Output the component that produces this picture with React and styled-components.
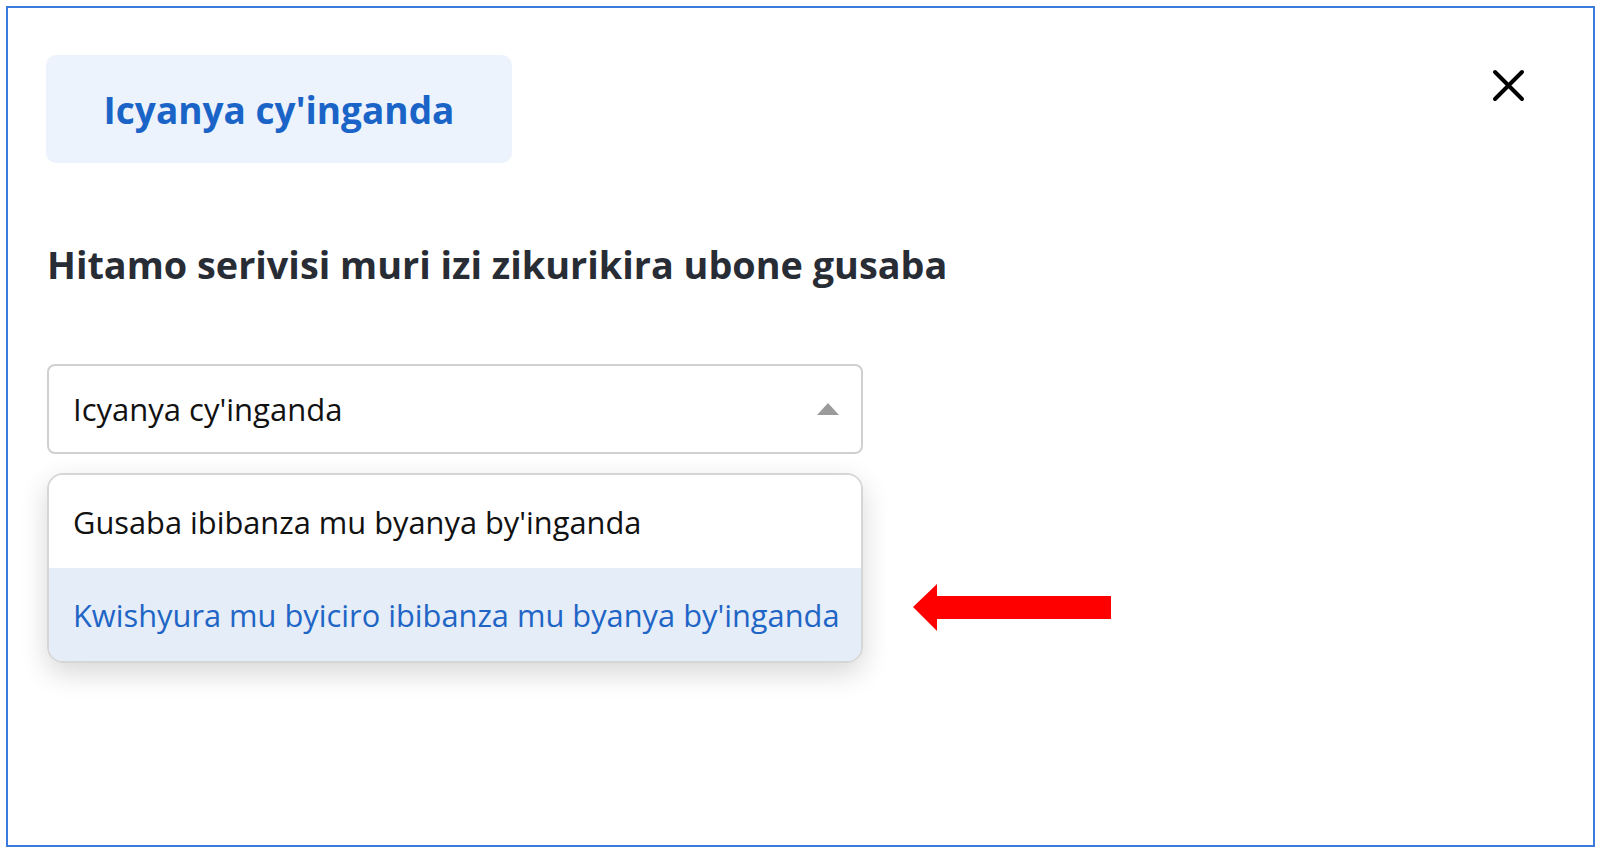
import styled, { createGlobalStyle } from "styled-components";

const GlobalStyle = createGlobalStyle`
  html, body {
    margin: 0;
    padding: 0;
    background: #ffffff;
  }
  body {
    font-family: "Open Sans", "Noto Sans", sans-serif;
  }
`;

const Frame = styled.div`
  box-sizing: border-box;
  margin: 6px 5px 9px 6px;
  height: 841px;
  border: 2px solid #3a7bdc;
  padding: 47px 68px 0 38px;
  display: flex;
  flex-direction: column;
`;

const Header = styled.div`
  display: flex;
  justify-content: space-between;
  align-items: flex-start;
`;

const Badge = styled.div`
  box-sizing: border-box;
  width: 466px;
  height: 108px;
  border-radius: 10px;
  background: #ecf3fc;
  display: flex;
  align-items: center;
  justify-content: center;
  font-family: "Open Sans", Lato, sans-serif;
  font-weight: 700;
  font-size: 37px;
  color: #1a64c8;
`;

const CloseButton = styled.button`
  margin-top: 14px;
  width: 33px;
  height: 33px;
  padding: 0;
  border: 0;
  background: none;
  cursor: pointer;
  svg {
    display: block;
  }
`;

const Heading = styled.h2`
  margin: 78px 0 0 1px;
  font-family: "Open Sans", Lato, sans-serif;
  font-weight: 700;
  font-size: 37.8px;
  line-height: 48px;
  color: #282c35;
`;

const Picker = styled.div`
  position: relative;
  width: 816px;
  margin: 75px 0 0 1px;
`;

const SelectBox = styled.div`
  box-sizing: border-box;
  height: 90px;
  border: 2px solid #d0d0d0;
  border-radius: 8px;
  padding: 0 22px 0 24px;
  display: flex;
  align-items: center;
  justify-content: space-between;
  font-size: 31px;
  color: #111111;
`;

const Caret = styled.span`
  width: 0;
  height: 0;
  border-left: 11px solid transparent;
  border-right: 11px solid transparent;
  border-bottom: 12px solid #9b9b9b;
`;

const Menu = styled.ul`
  list-style: none;
  margin: 19px 0 0 0;
  padding: 0;
  border: 2px solid #d6d6d6;
  border-radius: 16px;
  overflow: hidden;
  box-shadow: 0 10px 28px rgba(0, 0, 0, 0.16);
`;

const Option = styled.li`
  height: ${(p) => (p.$active ? "93px" : "93px")};
  padding-left: 24px;
  display: flex;
  align-items: center;
  font-size: 30.8px;
  color: ${(p) => (p.$active ? "#1f65c6" : "#111111")};
  background: ${(p) => (p.$active ? "#e4edf8" : "#ffffff")};
`;

const Pointer = styled.svg`
  position: absolute;
  left: 864px;
  bottom: 31px;
`;

const options = [
  "Gusaba ibibanza mu byanya by'inganda",
  "Kwishyura mu byiciro ibibanza mu byanya by'inganda",
];

export default function App() {
  return (
    <>
      <GlobalStyle />
      <Frame>
        <Header>
          <Badge>Icyanya cy'inganda</Badge>
          <CloseButton aria-label="close">
            <svg width="33" height="33" viewBox="0 0 33 33">
              <path
                d="M3 3 L30 30 M30 3 L3 30"
                stroke="#000"
                strokeWidth="4"
                strokeLinecap="round"
                fill="none"
              />
            </svg>
          </CloseButton>
        </Header>
        <Heading>Hitamo serivisi muri izi zikurikira ubone gusaba</Heading>
        <Picker>
          <SelectBox>
            <span>Icyanya cy'inganda</span>
            <Caret />
          </SelectBox>
          <Menu>
            {options.map((o, i) => (
              <Option key={o} $active={i === 1}>
                {o}
              </Option>
            ))}
          </Menu>
          <Pointer width="200" height="48" viewBox="0 0 200 48">
            <polygon
              points="2,23 26,0 26,12 200,12 200,35 26,35 26,47"
              fill="#ff0000"
            />
          </Pointer>
        </Picker>
      </Frame>
    </>
  );
}
